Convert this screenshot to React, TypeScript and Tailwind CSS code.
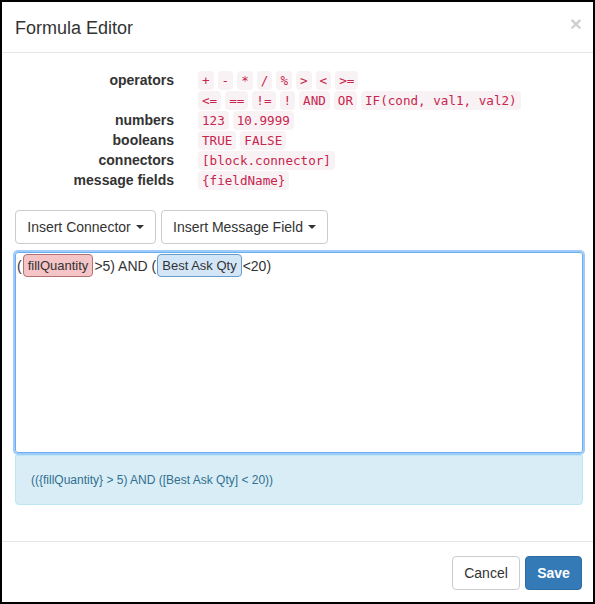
import type { ReactNode } from 'react'

const SANS = { fontFamily: '"Liberation Sans", Arial, sans-serif' }

function Code({ children }: { children: ReactNode }) {
  return (
    <code className="inline-block h-[19px] rounded-[4px] bg-[#f9f2f4] px-[4px] py-[2px] font-['DejaVu_Sans_Mono',monospace] text-[12.6px] leading-[15px] text-[#c7254e]">
      {children}
    </code>
  )
}

function Row({ label, children }: { label?: string; children: ReactNode }) {
  return (
    <div className="flex h-[20px] items-center">
      <dt className="w-[159px] shrink-0 text-right text-[14px] font-bold text-[#333]">{label}</dt>
      <dd className="ml-[24px] flex gap-x-[4px]">{children}</dd>
    </div>
  )
}

function Caret() {
  return <span className="ml-[5px] inline-block h-0 w-0 border-x-[4px] border-t-[4px] border-x-transparent border-t-[#333] align-middle" />
}

function Token({ kind, children }: { kind: 'field' | 'connector'; children: ReactNode }) {
  const cls =
    kind === 'field'
      ? 'bg-[#f5c4c6] border-[#b27272]'
      : 'bg-[#d3e6f8] border-[#6b9bca]'
  return (
    <span className={`mx-[1px] inline-flex h-[23px] items-center rounded-[4px] border px-[4px] text-[13px] ${cls}`}>
      {children}
    </span>
  )
}

export default function App() {
  const ops1 = ['+', '-', '*', '/', '%', '>', '<', '>=']
  const ops2 = ['<=', '==', '!=', '!', 'AND', 'OR', 'IF(cond, val1, val2)']

  return (
    <div style={SANS} className="flex h-[604px] w-[595px] flex-col border-2 border-black bg-white text-[14px] text-[#333]">
      <div className="flex h-[51px] items-center justify-between border-b border-[#e5e5e5] pl-[13px] pr-[11px]">
        <h4 className="mt-[1px] text-[18px] leading-[20px]">Formula Editor</h4>
        <span className="-mt-[7px] text-[21px] font-bold leading-none text-black/20">×</span>
      </div>

      <div className="flex-1 pl-[13px] pr-[10px] pt-[17px]">
        <dl>
          <Row label="operators">
            {ops1.map((o) => (
              <Code key={o}>{o}</Code>
            ))}
          </Row>
          <Row>
            {ops2.map((o) => (
              <Code key={o}>{o}</Code>
            ))}
          </Row>
          <Row label="numbers">
            <Code>123</Code>
            <Code>10.9999</Code>
          </Row>
          <Row label="booleans">
            <Code>TRUE</Code>
            <Code>FALSE</Code>
          </Row>
          <Row label="connectors">
            <Code>[block.connector]</Code>
          </Row>
          <Row label="message fields">
            <Code>{'{fieldName}'}</Code>
          </Row>
        </dl>

        <div className="mt-[20px] flex gap-[5px]">
          <button type="button" className="flex h-[34px] w-[141px] items-center justify-center rounded-[4px] border border-[#ccc] bg-white">
            Insert Connector
            <Caret />
          </button>
          <button type="button" className="flex h-[34px] w-[167px] items-center justify-center rounded-[4px] border border-[#ccc] bg-white">
            Insert Message Field
            <Caret />
          </button>
        </div>

        <div className="mt-[8px] h-[201px] rounded-[3px] border border-[#6aaef0] px-[1px] py-[1px] shadow-[0_0_0_2px_#9ecbfa]">
          <div className="flex items-center text-[14px] leading-[20px]">
            <span>(</span>
            <Token kind="field">fillQuantity</Token>
            <span>&gt;5) AND (</span>
            <Token kind="connector">Best Ask Qty</Token>
            <span>&lt;20)</span>
          </div>
        </div>

        <div className="mt-[2px] rounded-b-[4px] border border-[#bce8f1] bg-[#d9edf7] px-[15px] py-[14px] text-[12px] leading-[20px] text-[#31708f]">
          (({'{fillQuantity}'} &gt; 5) AND ([Best Ask Qty] &lt; 20))
        </div>
      </div>

      <div className="flex h-[61px] items-center justify-end gap-[5px] border-t border-[#e5e5e5] pr-[11px]">
        <button type="button" className="mt-[2px] h-[34px] w-[68px] rounded-[4px] border border-[#ccc] bg-white">
          Cancel
        </button>
        <button type="button" className="mt-[2px] h-[34px] w-[57px] rounded-[4px] border border-[#2e6da4] bg-[#337ab7] font-bold text-white">
          Save
        </button>
      </div>
    </div>
  )
}
